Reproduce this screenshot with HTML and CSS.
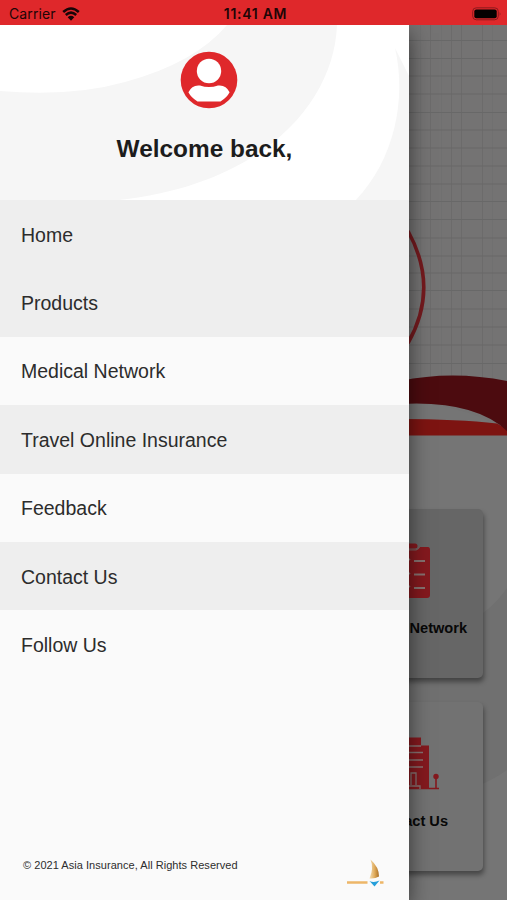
FILE: index.html
```html
<!DOCTYPE html>
<html lang="en">
<head>
<meta charset="utf-8">
<title>Asia Insurance</title>
<link rel="stylesheet" href="styles.css">
</head>
<body>
<div class="screen">
  <header class="status">
    <div class="carrier">Carrier
      <svg width="18" height="14" viewBox="0 0 18 14"><path d="M1.2 5Q9-2 16.8 5M3.8 8Q9 3.2 14.2 8" fill="none" stroke="#180507" stroke-width="2.5"/><path d="M5.7 10.2Q9 7.4 12.3 10.2L9 13.7z" fill="#180507"/></svg>
    </div>
    <div class="time">11:41 AM</div>
    <svg class="battery" width="30" height="14" viewBox="0 0 30 14"><rect x=".7" y=".8" width="25.6" height="12" rx="3.6" fill="none" stroke="#8d1a1d"/><rect x="2.3" y="2.4" width="22.4" height="8.8" rx="2" fill="#050101"/><path d="M27.7 4.9q1.8 1.9 0 3.8z" fill="#8d1a1d"/></svg>
  </header>
  <div class="stage">
    <main class="app">
      <svg class="hero" width="507" height="411" viewBox="0 25 507 411">
        <rect y="25" width="507" height="411" fill="#747373"/>
        <g stroke="#686868" stroke-width="1">
          <path d="M409 40.5H507M409 58.5H507M409 76H507M409 94H507M409 112.5H507M409 130H507M409 148H507M409 166H507M409 184H507M409 201.5H507M409 219.5H507M409 238H507M409 256H507M409 273H507M409 290.5H507M409 309H507M409 327H507M409 345H507M409 363.5H507"/>
          <path d="M430.5 25V380M451.5 25V380M461.5 25V380M482.5 25V380" opacity=".65"/>
          <path d="M420.5 25V380M441.5 25V380M492.5 25V380" opacity=".25"/>
        </g>
        <path d="M408 231Q439.500 288 408 343" fill="none" stroke="#741a1e" stroke-width="3.6"/>
        <path d="M400 403Q460 402 507 431V436H400z" fill="#757575"/>
        <path d="M400 419Q458 419 497 423.500L507 429V435.500H400z" fill="#7d1411"/>
        <path d="M400 381Q452 370 507 381V431Q474 400 400 404z" fill="#4c0b0f"/>
      </svg>
      <section class="cards">
        <svg class="swoosh" width="98" height="464" viewBox="409 436 98 464"><path d="M507 588Q490 612 470 620L409 650V797Q470 797 507 770z" fill="#707070"/></svg>
        <article class="card pressed">
          <svg width="40" height="58" viewBox="390 543 40 58"><path d="M391 549H417Q419 549 420 547H428Q430 547 430 550V595Q430 598 427 598H391z" fill="#84191e"/><path d="M391 543.500H415Q417.500 543.500 417.500 546T415 548.500H391z" fill="#84191e"/><path d="M400 549.800H416Q419 549 419.500 546" fill="none" stroke="#77605f" stroke-width="1.300"/><path d="M414 561H425M414 574.500H425M414 588H425M407 561l3-2M407 575l3-2M407 588l3-2" fill="none" stroke="#85716f" stroke-width="1.900"/></svg>
          <h2>Medical Network</h2>
        </article>
        <article class="card">
          <svg width="58" height="54" viewBox="381 736 58 54"><path d="M390 737.500H421V745.500H429V788H390z" fill="#84191e"/><path d="M382 788.500H439M436 775V788" stroke="#84191e" stroke-width="1.600"/><circle cx="436" cy="776.500" r="2.700" fill="#84191e"/><path d="M400 746H421M406 752.500H423M406 760H423M406 767H423M411 785V773H416V785M409 786H420V789" fill="none" stroke="#857170" stroke-width="1.300"/></svg>
          <h2>Contact Us</h2>
        </article>
      </section>
    </main>
    <aside class="drawer">
      <div class="profile">
        <svg class="waves" width="409" height="175" viewBox="0 25 409 175"><rect y="25" width="409" height="175" fill="#fff"/><path d="M0 91Q72 97 125 82Q195 63 227 25H337C334 105 260 185 119 200H0z" fill="#f6f6f6"/><path d="M395 48L409 76V200H356C394 160 407 100 395 48z" fill="#f6f6f6"/></svg>
        <svg class="avatar" width="58" height="58" viewBox="0 0 58 58"><circle cx="29" cy="29" r="28.3" fill="#df282b"/><circle cx="29" cy="20" r="12.2" fill="#fff"/><path d="M20 34.500Q29 37.500 38 34.500Q46 33.500 49.600 41.300Q47 46.500 40.500 50.500H17.500Q11 46.500 8.400 41.300Q12 33.500 20 34.500z" fill="#fff"/></svg>
        <h1>Welcome back,</h1>
      </div>
      <nav class="menu">
        <a class="shaded">Home</a>
        <a class="shaded">Products</a>
        <a>Medical Network</a>
        <a class="shaded">Travel Online Insurance</a>
        <a>Feedback</a>
        <a class="shaded">Contact Us</a>
        <a>Follow Us</a>
      </nav>
      <footer class="foot">
        <p>© 2021 Asia Insurance, All Rights Reserved</p>
        <svg width="38" height="29" viewBox="346 858 38 29"><defs><linearGradient id="sail"><stop offset="0" stop-color="#f5dfb5"/><stop offset=".55" stop-color="#dfaa5a"/><stop offset="1" stop-color="#a96f26"/></linearGradient></defs><path d="M370.5 859.5Q379 867 379 876.5Q375 879 369.5 878.5Q374 868 370.5 859.5z" fill="url(#sail)"/><path d="M347 882.5H367.5M380 882.5H383.5" stroke="#edb668" stroke-width="2.4"/><path d="M369.500 881Q374 883 379.500 880.500L374.500 886.500z" fill="#259fda"/></svg>
      </footer>
    </aside>
  </div>
</div>
</body>
</html>
```
FILE: styles.css
```css
* { box-sizing: border-box; }
body { margin: 0; font-family: "Liberation Sans", Arial, sans-serif; }
h1, h2, p { margin: 0; }
svg { display: block; flex: none; }

.screen { display: flex; flex-direction: column; width: 507px; height: 900px; overflow: hidden; }

.status {
  display: grid;
  grid-template-columns: 1fr auto 1fr;
  align-items: center;
  height: 25px;
  padding: 2px 5px 0 9px;
  background: #df282b;
  color: #200506;
  font-family: Inter, sans-serif;
  font-size: 14px;
}
.carrier { display: flex; align-items: center; gap: 6px; letter-spacing: .1px; }
.time { font-weight: 600; letter-spacing: .7px; }
.battery { justify-self: end; }

.stage { position: relative; flex: 1; min-height: 0; }

.app { display: flex; flex-direction: column; height: 100%; background: #757575; overflow: hidden; }
.cards {
  position: relative;
  flex: 1;
  display: flex;
  flex-direction: column;
  align-items: flex-end;
  gap: 24px;
  padding: 73px 24px 0 0;
}
.swoosh { position: absolute; top: 0; right: 0; }
.card {
  position: relative;
  display: flex;
  flex-direction: column;
  align-items: center;
  width: 147px;
  height: 169px;
  padding-top: 34px;
  border-radius: 5px;
  background: #727272;
  box-shadow: 1px 4px 5px rgba(0, 0, 0, .4);
}
.card.pressed { background: #666; }
.card h2 { margin-top: 19px; font-size: 14.6px; line-height: 17px; color: #080808; white-space: nowrap; }
.card:last-child h2 { margin-top: 23px; }

.drawer {
  position: absolute;
  inset: 0 auto 0 0;
  display: flex;
  flex-direction: column;
  width: 409px;
  background: #fafafa;
  box-shadow: 0 8px 20px rgba(0, 0, 0, .55);
  clip-path: inset(0 -60px 0 0);
}
.profile { position: relative; display: flex; flex-direction: column; align-items: center; height: 175px; padding-top: 26px; }
.waves { position: absolute; inset: 0; }
.avatar { position: relative; margin-left: 8px; }
.profile h1 { position: relative; margin-top: 26px; font-size: 24.4px; line-height: 28px; color: #1c1c1c; }

.menu { display: grid; grid-auto-rows: 68.4px; }
.menu a { display: flex; align-items: center; padding: 2px 21px 0; font-size: 19.5px; color: #2c2c2c; }
.menu .shaded { background: #eee; }

.foot { display: flex; justify-content: space-between; margin-top: auto; padding: 0 25px 13px 23px; }
.foot p { font-size: 11px; line-height: 14px; letter-spacing: .04px; color: #2d2d2d; }
```
